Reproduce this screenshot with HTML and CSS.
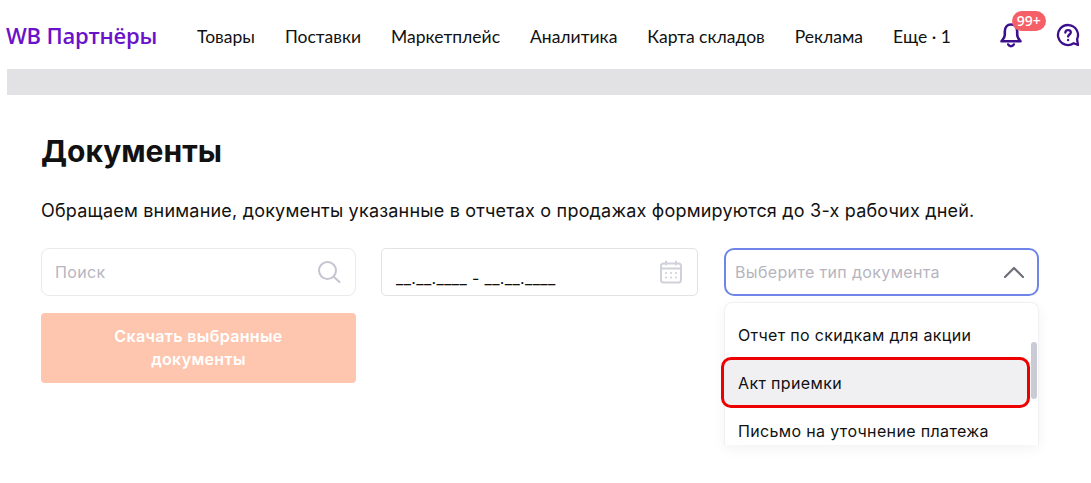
FILE: index.html
```html
<!DOCTYPE html>
<html lang="ru">
<head>
  <meta charset="UTF-8">
  <meta name="viewport" content="width=device-width, initial-scale=1.0">
  <title>Документы</title>
  <link rel="stylesheet" href="styles.css">
</head>
<body>
  <!-- Header -->
  <header class="header">
    <a class="logo">WB Партнёры</a>
    <nav class="nav">
      <a>Товары</a>
      <a>Поставки</a>
      <a>Маркетплейс</a>
      <a>Аналитика</a>
      <a>Карта складов</a>
      <a>Реклама</a>
      <a>Еще · 1</a>
    </nav>
    <div class="header-icons">
      <div class="bell">
        <svg width="28" height="28" viewBox="0 0 28 28" fill="none" stroke="#3c0f8c" stroke-width="2.6" stroke-linejoin="round" stroke-linecap="round">
          <path d="M14 3.5c-4 0-6.2 3-6.2 7v3.5c0 2.5-1.5 4-3.3 6.2h19c-1.800-2.200-3.300-3.700-3.300-6.200v-3.500c0-4-2.200-7-6.200-7z"/>
          <path d="M11.200 23.500c.7 1.300 1.600 1.800 2.800 1.800s2.100-.5 2.800-1.800"/>
        </svg>
        <span class="badge">99+</span>
      </div>
      <svg class="help" width="24" height="24" viewBox="0 0 24 24" fill="none" stroke="#3c0f8c" stroke-width="2.300" stroke-linecap="round" stroke-linejoin="round">
        <path d="M22 22L17.700 20.200A10 10 0 1 1 21.060 16.200Z"/>
        <path d="M9.300 9.500c.2-1.500 1.300-2.400 2.800-2.400s2.700 1 2.700 2.300c0 2-2.700 2.200-2.700 4.200"/>
        <path d="M12.100 17v.2"/>
      </svg>
    </div>
  </header>

  <div class="band"></div>

  <!-- Main content -->
  <main class="content">
    <h1>Документы</h1>
    <p class="note">Обращаем внимание, документы указанные в отчетах о продажах формируются до 3-х рабочих дней.</p>

    <div class="filters">
      <div>
        <div class="field field-search">
          <span class="placeholder">Поиск</span>
          <svg width="24" height="24" viewBox="0 0 24 24" fill="none" stroke="#c4c5d0" stroke-width="2" stroke-linecap="round">
            <circle cx="10.500" cy="10.500" r="8.500"/>
            <path d="M17 17l5.500 5"/>
          </svg>
        </div>
        <button class="download">Скачать выбранные документы</button>
      </div>

      <div>
        <div class="field field-date">
          <span class="date-mask">__.__.____ - __.__.____</span>
          <svg width="24" height="24" viewBox="0 0 24 24" fill="none" stroke="#d0d1da" stroke-width="2" stroke-linecap="round">
            <rect x="2" y="3.500" width="20" height="19" rx="2.500"/>
            <path d="M2 8.500h20M7 1.500v3M17 1.500v3"/>
            <path d="M7 13h.1M12 13h.1M17 13h.1M7 17.500h.1M12 17.500h.1M17 17.500h.1"/>
          </svg>
        </div>
      </div>

      <div>
        <div class="field field-select">
          <span class="placeholder">Выберите тип документа</span>
          <svg width="22" height="14" viewBox="0 0 22 14" fill="none" stroke="#6d6e78" stroke-width="2.200" stroke-linecap="round" stroke-linejoin="round">
            <path d="M2 12l9-9 9 9"/>
          </svg>
        </div>
        <div class="dropdown-wrap">
          <div class="dropdown">
            <ul class="options">
              <li>Отчет по скидкам для акции</li>
              <li class="selected">Акт приемки</li>
              <li>Письмо на уточнение платежа</li>
            </ul>
            <span class="scrollbar"></span>
          </div>
          <span class="highlight"></span>
        </div>
      </div>
    </div>
  </main>
</body>
</html>
```

FILE: styles.css
```css
/* Global Styles */
* {
  box-sizing: border-box;
}
html, body {
  height: 483px;
  overflow: hidden;
}
body {
  margin: 0;
  background-color: #fff;
  color: #111;
  font-family: Inter, "Noto Sans", sans-serif;
}

/* Header */
.header {
  display: flex;
  align-items: center;
  height: 69px;
  padding: 0 0 0 6px;
}
.logo {
  width: 191px;
  color: #6a12c9;
  font-family: "Open Sans", sans-serif;
  font-size: 22px;
  font-weight: 600;
  letter-spacing: -0.2px;
}
.nav {
  display: flex;
  gap: 30px;
  padding-top: 3px;
  font-family: Lato, "Open Sans", sans-serif;
  font-size: 17.5px;
  white-space: nowrap;
}
.header-icons {
  display: flex;
  align-items: center;
  gap: 31px;
  margin-left: 46px;
}
.bell {
  position: relative;
  display: flex;
}
.badge {
  position: absolute;
  top: -10px;
  left: 15px;
  padding: 0 5px;
  height: 20px;
  border-radius: 10px;
  background-color: #f55f68;
  color: #fff;
  font-family: "Open Sans", sans-serif;
  font-size: 14px;
  font-weight: 600;
  line-height: 20px;
}

.band {
  height: 26px;
  margin-left: 7px;
  background-color: #e2e2e4;
}

/* Content */
.content {
  padding: 32px 0 0 41px;
}
h1 {
  margin: 0;
  font-size: 30px;
  font-weight: 700;
  line-height: 48px;
}
.note {
  margin: 23px 0 0;
  font-size: 18px;
  letter-spacing: 0.2px;
  line-height: 26px;
}

/* Filters */
.filters {
  display: grid;
  grid-template-columns: 315px 317px 316px;
  column-gap: 25px;
  margin-top: 24px;
  align-items: start;
}
.filters > div:last-child {
  margin-left: 1px;
}
.field {
  display: flex;
  align-items: center;
  justify-content: space-between;
  height: 48px;
  border: 1px solid #e9e9ee;
  border-radius: 8px;
  font-size: 16px;
  letter-spacing: 0.35px;
}
.placeholder {
  color: #b5b5c0;
}
.field-search {
  padding: 0 14px 0 13px;
}
.field-date {
  padding: 0 14px 0 14px;
  border-color: #e2e2e6;
  border-radius: 5px;
}
.date-mask {
  padding-top: 12px;
}
.field-select {
  padding: 0 12px 0 9px;
  border: 2px solid #6f86e8;
  border-radius: 10px;
}

.download {
  display: block;
  width: 100%;
  height: 70px;
  margin-top: 17px;
  padding: 0 60px;
  border: none;
  border-radius: 4px;
  background-color: #fec6ae;
  color: #fff;
  font-family: Inter, sans-serif;
  font-size: 16px;
  font-weight: 600;
  letter-spacing: 0.35px;
  line-height: 23px;
}

/* Dropdown */
.dropdown-wrap {
  position: relative;
  margin-top: 6px;
}
.dropdown {
  position: relative;
  height: 143px;
  overflow: hidden;
  border: 1px solid #f0f0f3;
  border-bottom: none;
  border-radius: 8px 8px 0 0;
  box-shadow: 0 4px 14px rgba(0, 0, 0, 0.05);
}
.options {
  margin: 0;
  padding: 8px 0 0;
  list-style: none;
  font-size: 16px;
  letter-spacing: 0.35px;
}
.options li {
  height: 48px;
  padding: 0 0 0 13px;
  line-height: 48px;
}
.options .selected {
  margin-right: 10px;
  background-color: #f0f0f3;
}
.highlight {
  position: absolute;
  top: 55px;
  left: -3px;
  width: 309px;
  height: 51px;
  border: 3px solid #ee0000;
  border-radius: 10px;
}
.scrollbar {
  position: absolute;
  top: 39px;
  right: 1px;
  width: 6px;
  height: 57px;
  border-radius: 3px;
  background-color: #cbcbd5;
}
```
